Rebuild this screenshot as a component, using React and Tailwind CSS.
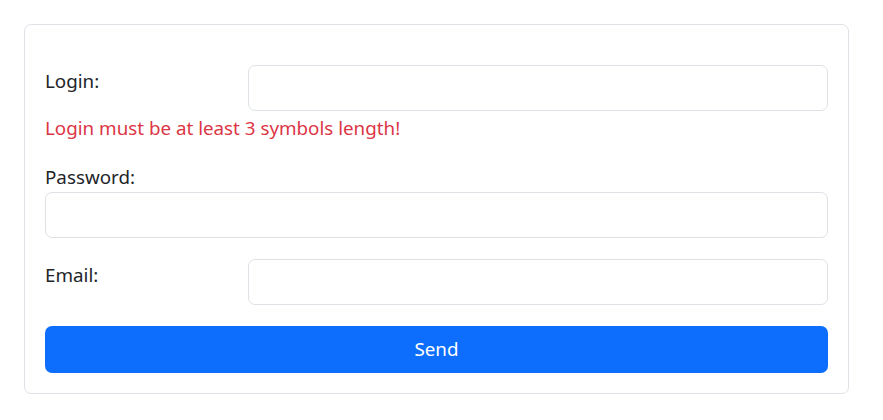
import React from 'react';

const inputCls = 'block w-full min-w-0 h-[46px] rounded-[7px] border border-[#dee2e6] bg-white px-[14px] outline-none';

export default function App() {
  return (
    <div className="bg-white min-h-screen pt-[24px] pl-[24px] text-[#212529] text-[18.8px] leading-[29px]" style={{ fontFamily: '"Noto Sans", sans-serif' }}>
      <form className="w-[825px] border border-[#dee2e6] rounded-[7px] px-[20px] pt-[40px] pb-[20px]">
        <div className="flex">
          <label className="w-[203px] shrink-0 pt-[2px]">Login:</label>
          <input type="text" className={inputCls} />
        </div>
        <div className="mt-[3px] text-[#dc3545]">Login must be at least 3 symbols length!</div>

        <label className="block mt-[20px]">Password:</label>
        <input type="password" className={inputCls} />

        <div className="flex mt-[21px]">
          <label className="w-[203px] shrink-0 pt-[2px]">Email:</label>
          <input type="email" className={inputCls} />
        </div>

        <button type="button" className="mt-[21px] w-full h-[47px] rounded-[7px] bg-[#0d6efd] text-white">
          Send
        </button>
      </form>
    </div>
  );
}
